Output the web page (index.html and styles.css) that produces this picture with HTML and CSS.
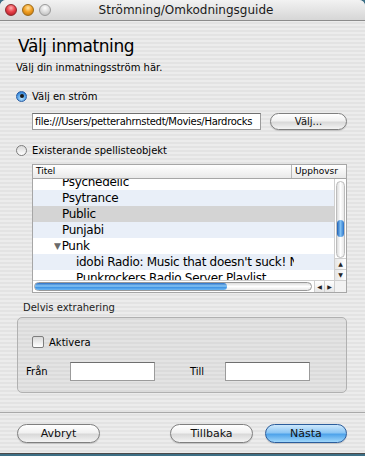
FILE: index.html
```html
<!DOCTYPE html>
<html lang="sv">
<head>
  <meta charset="UTF-8" />
  <title>Strömning/Omkodningsguide</title>
  <link rel="stylesheet" href="styles.css">
</head>
<body>

  <div class="window">
    <div class="titlebar">
      <div class="lights">
        <span class="light red"></span>
        <span class="light orange"></span>
        <span class="light gray"></span>
      </div>
      <div class="title">Strömning/Omkodningsguide</div>
    </div>

    <div class="content">
      <h1>Välj inmatning</h1>
      <p class="sub">Välj din inmatningsström här.</p>

      <label class="radio-row first">
        <span class="radio on"></span>
        <span>Välj en ström</span>
      </label>

      <div class="stream-row">
        <div class="field path">file:///Users/petterahrnstedt/Movies/Hardrocks</div>
        <button class="aqua small">Välj...</button>
      </div>

      <label class="radio-row second">
        <span class="radio"></span>
        <span>Existerande spellisteobjekt</span>
      </label>

      <div class="table">
        <div class="thead">
          <div class="th col-title">Titel</div>
          <div class="th col-author">Upphovsr</div>
        </div>
        <div class="tbody">
          <div class="rows">
            <div class="list">
              <div class="row"><span class="cell">Psychedelic</span></div>
              <div class="row alt"><span class="cell">Psytrance</span></div>
              <div class="row sel"><span class="cell">Public</span></div>
              <div class="row alt"><span class="cell">Punjabi</span></div>
              <div class="row group"><span class="cell"><span class="tri">&#9660;</span>Punk</span></div>
              <div class="row alt child"><span class="cell">idobi Radio: Music that doesn't suck! N</span></div>
              <div class="row child"><span class="cell">Punkrockers Radio Server Playlist</span></div>
            </div>
          </div>
          <div class="vscroll">
            <div class="vtrack"><div class="vthumb"></div></div>
            <div class="arrow">&#9650;</div>
            <div class="arrow">&#9660;</div>
          </div>
          <div class="hscroll">
            <div class="htrack"><div class="hthumb"></div></div>
            <div class="arrow">&#9664;</div>
            <div class="arrow">&#9654;</div>
          </div>
          <div class="corner"></div>
        </div>
      </div>

      <div class="group-label">Delvis extrahering</div>
      <div class="groupbox">
        <label class="check-row">
          <span class="checkbox"></span>
          <span>Aktivera</span>
        </label>
        <div class="range-row">
          <span class="lbl from">Från</span>
          <div class="field small-field"></div>
          <span class="lbl to">Till</span>
          <div class="field small-field"></div>
        </div>
      </div>
    </div>

    <div class="footer">
      <button class="aqua">Avbryt</button>
      <div class="spacer"></div>
      <button class="aqua">Tillbaka</button>
      <button class="aqua default">Nästa</button>
    </div>
  </div>

</body>
</html>
```

FILE: styles.css
```css
body {
  margin: 0;
  padding: 0;
  background-color: #3d6f86;
  font-family: "DejaVu Sans", sans-serif;
  color: #000;
}

/* Window frame */
.window {
  width: 365px;
  height: 453px;
  border-bottom: 1px solid #4a4a4a;
  border-radius: 6px 6px 0 0;
  overflow: hidden;
  background: repeating-linear-gradient(#ececec 0, #ececec 2px, #e3e3e3 2px, #e3e3e3 4px);
  display: flex;
  flex-direction: column;
}

.titlebar {
  height: 20px;
  border-bottom: 1px solid #8c8c8c;
  background: linear-gradient(#f2f2f2, #d6d6d6);
  display: flex;
  align-items: center;
}

.lights {
  display: flex;
  gap: 5px;
  padding-left: 5px;
}

.light {
  width: 12px;
  height: 12px;
  border-radius: 50%;
  box-sizing: border-box;
}

.light.red {
  background: radial-gradient(circle at 50% 30%, #ffb0b0 0, #e9434c 45%, #a5121c 100%);
  border: 1px solid #8b2a2e;
}

.light.orange {
  background: radial-gradient(circle at 50% 30%, #ffe3a5 0, #f3a123 45%, #b66a06 100%);
  border: 1px solid #9a6a1a;
}

.light.gray {
  background: radial-gradient(circle at 50% 30%, #ffffff 0, #dadada 50%, #b3b3b3 100%);
  border: 1px solid #9a9a9a;
}

.title {
  flex: 1;
  text-align: center;
  font-size: 12px;
  margin-right: 52px;
  padding-left: 8px;
  color: #1a1a1a;
}

/* Main content */
.content {
  padding: 0 18px 0 16px;
}

h1 {
  font-size: 17px;
  font-weight: normal;
  letter-spacing: -0.4px;
  margin: 14px 0 0 2px;
  line-height: 22px;
}

.sub {
  font-size: 10px;
  line-height: 14px;
  margin: 4px 0 0 0;
}

.radio-row {
  display: flex;
  align-items: center;
  gap: 5px;
  font-size: 10px;
  height: 14px;
}

.radio-row.first {
  margin-top: 14px;
}

.radio-row.second {
  margin-top: 13px;
}

.radio {
  width: 11px;
  height: 11px;
  border-radius: 50%;
  box-sizing: border-box;
  border: 1px solid #7d7d7d;
  background: linear-gradient(#d9d9d9, #ffffff);
  display: flex;
  align-items: center;
  justify-content: center;
}

.radio.on {
  border-color: #2a5da3;
  background: radial-gradient(circle at 50% 70%, #b8e0fb 0, #4b9be6 60%, #1e5fb4 100%);
}

.radio.on::after {
  content: "";
  width: 4px;
  height: 4px;
  border-radius: 50%;
  background: #1a1a1a;
}

.stream-row {
  display: flex;
  align-items: center;
  margin: 10px 0 0 16px;
  gap: 9px;
}

.field {
  background: #fff;
  border: 1px solid #9b9b9b;
  border-top-color: #6f6f6f;
  box-sizing: border-box;
}

.field.path {
  width: 229px;
  height: 17px;
  font-size: 10px;
  letter-spacing: -0.3px;
  line-height: 15px;
  padding-left: 2px;
  white-space: nowrap;
  overflow: hidden;
}

/* Aqua buttons */
.aqua {
  font-family: "DejaVu Sans", sans-serif;
  font-size: 11px;
  width: 83px;
  height: 19px;
  padding: 0;
  border: 1px solid #7f7f7f;
  border-radius: 10px;
  background: linear-gradient(#ffffff 0, #f1f1f1 45%, #d9d9d9 55%, #f4f4f4 100%);
  color: #111;
  box-shadow: 0 1px 1px rgba(0, 0, 0, 0.15);
}

.aqua.small {
  width: 77px;
  height: 17px;
  font-size: 10px;
}

.aqua.default {
  width: 82px;
  border-color: #2b5d9c;
  background: linear-gradient(#cde8fc 0, #8cc6f4 45%, #4fa3ea 55%, #9fd7fb 100%);
}

/* Table */
.table {
  margin: 7px 0 0 16px;
  width: 315px;
  height: 129px;
  border: 1px solid #a6a6a6;
  box-sizing: border-box;
  background: #fff;
  display: flex;
  flex-direction: column;
}

.thead {
  display: flex;
  height: 13px;
  border-bottom: 1px solid #a6a6a6;
  background: linear-gradient(#ffffff, #e9e9e9);
  font-size: 9px;
  line-height: 13px;
}

.th {
  padding-left: 3px;
}

.col-title {
  width: 255px;
  border-right: 1px solid #b8b8b8;
}

.col-author {
  flex: 1;
}

.tbody {
  flex: 1;
  display: grid;
  grid-template-columns: 1fr 12px;
  grid-template-rows: 1fr 12px;
  overflow: hidden;
}

.rows {
  overflow: hidden;
}

.list {
  margin-top: -5px;
}

.row {
  height: 16px;
  line-height: 16px;
  font-size: 12px;
  letter-spacing: -0.3px;
  padding-left: 29px;
  background: #fff;
}

.cell {
  display: block;
  white-space: nowrap;
  overflow: hidden;
}

.row.alt {
  background: #e9eff8;
}

.row.sel {
  background: #d4d4d4;
}

.row.group {
  padding-left: 21px;
}

.tri {
  font-size: 9px;
  color: #6a6a6a;
  margin-right: 1px;
  vertical-align: 1px;
}

.row.child {
  padding-left: 43px;
}

.row.child .cell {
  width: 218px;
}

.vscroll {
  display: flex;
  flex-direction: column;
  border-left: 1px solid #cfcfcf;
  background: #fff;
}

.vtrack {
  flex: 1;
  margin: 2px 1px 0 1px;
  border: 1px solid #bdbdbd;
  border-radius: 5px;
  background: linear-gradient(90deg, #dcdcdc, #ffffff 50%, #e8e8e8);
  display: flex;
  flex-direction: column;
  padding-top: 38px;
}

.vthumb {
  height: 17px;
  border-radius: 5px;
  background: linear-gradient(90deg, #1e5fb4, #7fc0f3 50%, #2b73c9);
}

.arrow {
  height: 10px;
  font-size: 6px;
  line-height: 10px;
  text-align: center;
  color: #222;
  background: linear-gradient(90deg, #e6e6e6, #ffffff);
  border-top: 1px solid #cfcfcf;
}

.hscroll {
  display: flex;
  align-items: stretch;
  border-top: 1px solid #cfcfcf;
  background: #fff;
}

.htrack {
  flex: 1;
  margin: 1px 2px 1px 1px;
  border: 1px solid #9a9a9a;
  border-radius: 6px;
  background: linear-gradient(#dcdcdc, #ffffff 50%, #e8e8e8);
  display: flex;
}

.hthumb {
  width: 192px;
  border-radius: 6px;
  background: linear-gradient(#2a6fc6, #8ccaf6 45%, #3f92e2 60%, #6db7f2);
}

.hscroll .arrow {
  width: 9px;
  height: auto;
  line-height: 11px;
  border-top: none;
  border-left: 1px solid #cfcfcf;
  background: linear-gradient(#ffffff, #e6e6e6);
}

.corner {
  background: #f2f2f2;
  border-top: 1px solid #cfcfcf;
  border-left: 1px solid #cfcfcf;
}

/* Partial extraction group */
.group-label {
  font-size: 10px;
  line-height: 14px;
  margin: 8px 0 0 7px;
  color: #222;
}

.groupbox {
  margin-top: 2px;
  margin-left: 1px;
  height: 76px;
  box-sizing: border-box;
  border: 1px solid #b1b1b1;
  border-radius: 5px;
  background: rgba(0, 0, 0, 0.035);
  padding: 17px 0 0 0;
}

.check-row {
  display: flex;
  align-items: center;
  gap: 5px;
  margin-left: 14px;
  font-size: 10px;
  height: 14px;
}

.checkbox {
  width: 10px;
  height: 10px;
  border: 1px solid #7d7d7d;
  border-radius: 2px;
  background: linear-gradient(#d9d9d9, #ffffff);
}

.range-row {
  display: flex;
  align-items: center;
  margin-top: 13px;
  font-size: 10px;
}

.lbl.from {
  margin-left: 8px;
  width: 44px;
}

.lbl.to {
  margin-left: 35px;
  width: 35px;
}

.small-field {
  width: 85px;
  height: 19px;
}

/* Footer buttons */
.footer {
  margin-top: auto;
  border-top: 1px solid #a9a9a9;
  height: 41px;
  box-sizing: border-box;
  display: flex;
  align-items: flex-start;
  padding: 11px 18px 0 17px;
  gap: 12px;
}

.spacer {
  flex: 1;
}
```
